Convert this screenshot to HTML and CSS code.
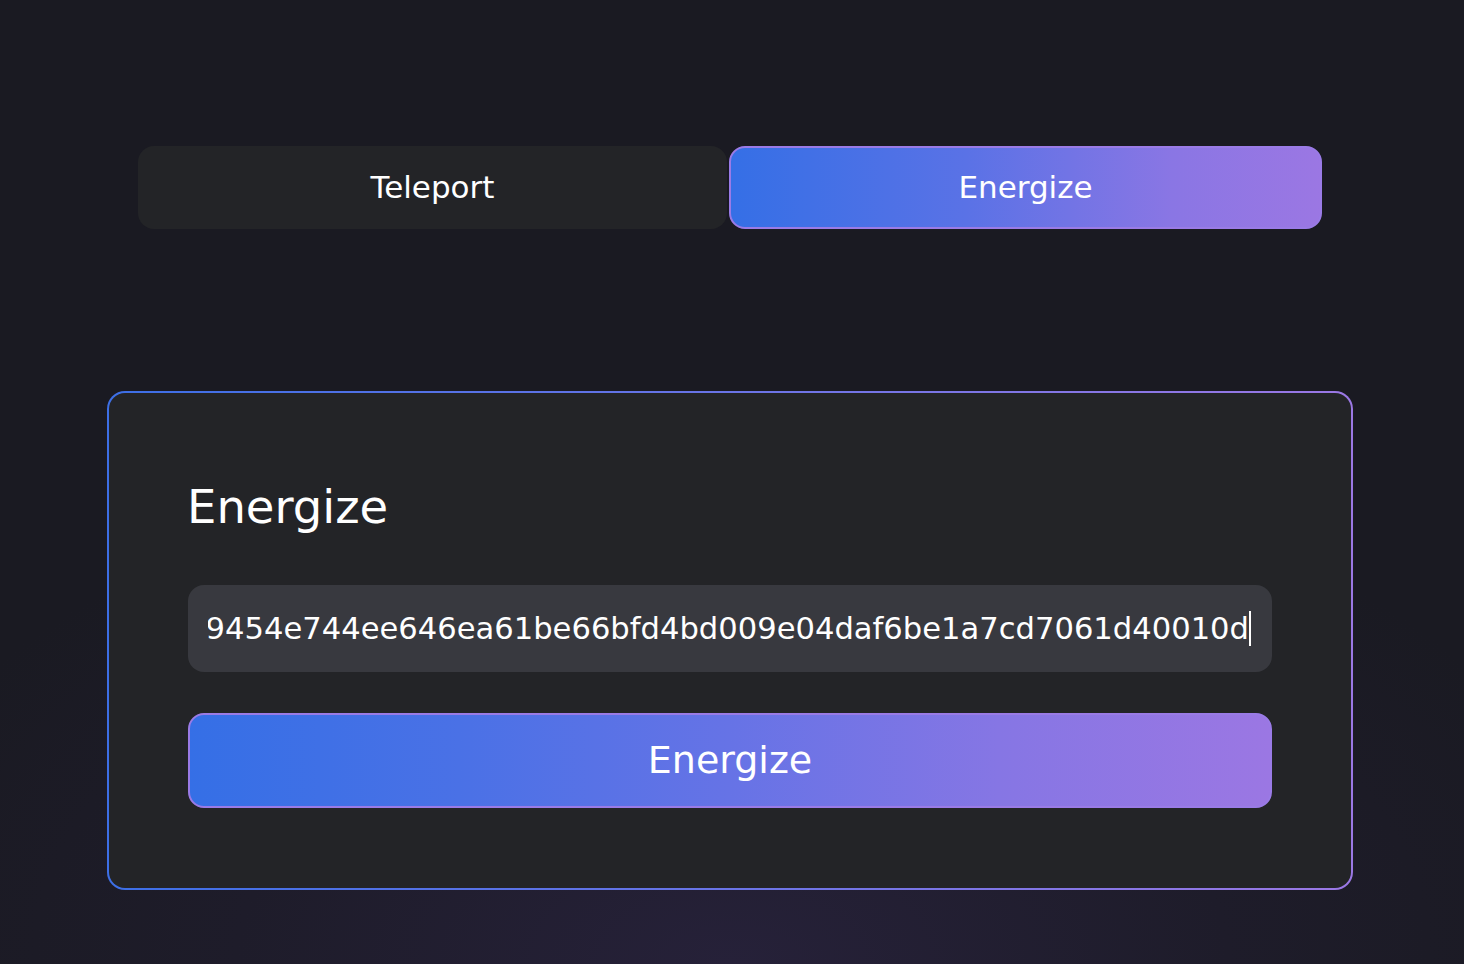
FILE: index.html
```html
<!DOCTYPE html>
<html lang="en">
<head>
<meta charset="utf-8">
<title>Energize</title>
<link rel="stylesheet" href="styles.css">
</head>
<body>
<main class="page">
  <nav class="tabs">
    <button class="tab">Teleport</button>
    <button class="tab tab-active">Energize</button>
  </nav>
  <section class="card">
    <h1 class="card-title">Energize</h1>
    <div class="field">
      <div class="field-clip">
        <span class="field-text">3f8a2c09454e744ee646ea61be66bfd4bd009e04daf6be1a7cd7061d40010d</span><span class="caret"></span>
      </div>
    </div>
    <button class="action">Energize</button>
  </section>
</main>
</body>
</html>
```

FILE: styles.css
```css
html, body {
  margin: 0;
  padding: 0;
  height: 100%;
}

body {
  background: radial-gradient(ellipse 900px 520px at 50% 100%, #262139 0%, #1e1c2a 55%, #1a1a22 100%), #1a1a22;
  font-family: "DejaVu Sans", "Inter", sans-serif;
  color: #ffffff;
  overflow: hidden;
}

.page {
  box-sizing: border-box;
  width: 1464px;
  height: 964px;
  padding: 146px 4px 0 0;
  display: flex;
  flex-direction: column;
  align-items: center;
}

.tabs {
  display: flex;
  gap: 2px;
  width: 1184px;
}

.tab {
  flex: 1;
  height: 83px;
  border: 0;
  border-radius: 16px;
  background: #232427;
  color: #ffffff;
  font-family: inherit;
  font-size: 31px;
  line-height: 1;
  padding: 0;
}

.tab-active {
  border: 2px solid #9a7be6;
  background: linear-gradient(90deg, #356fe6 0%, #5a72e6 40%, #8a76e4 75%, #9b77e3 100%);
}

.card {
  box-sizing: border-box;
  width: 1246px;
  margin-top: 162px;
  padding: 87px 79px 80px;
  border: 2px solid transparent;
  border-radius: 18px;
  background: linear-gradient(#232427, #232427) padding-box,
              linear-gradient(90deg, #3d6fe6 0%, #6a74e6 50%, #9b78e4 100%) border-box;
  display: flex;
  flex-direction: column;
}

.card-title {
  margin: 0 0 0 -1px;
  font-size: 46.5px;
  font-weight: normal;
  line-height: 1.2;
}

.field {
  box-sizing: border-box;
  margin-top: 49px;
  height: 87px;
  padding: 0 21px 0 20px;
  border-radius: 16px;
  background: #38393f;
  display: flex;
  align-items: center;
}

.field-clip {
  flex: 1;
  min-width: 0;
  display: flex;
  justify-content: flex-end;
  align-items: center;
  overflow: hidden;
  white-space: nowrap;
  font-size: 30.6px;
  height: 40px;
}

.field-text {
  flex: none;
}

.caret {
  flex: none;
  width: 2px;
  height: 35px;
  background: #ffffff;
}

.action {
  margin-top: 41px;
  height: 95px;
  border: 2px solid #9a7be6;
  border-radius: 16px;
  background: linear-gradient(90deg, #356fe6 0%, #4a71e6 25%, #6673e6 50%, #8676e4 75%, #9b77e3 100%);
  color: #ffffff;
  font-family: inherit;
  font-size: 38px;
  line-height: 1;
  padding: 0;
}
```
